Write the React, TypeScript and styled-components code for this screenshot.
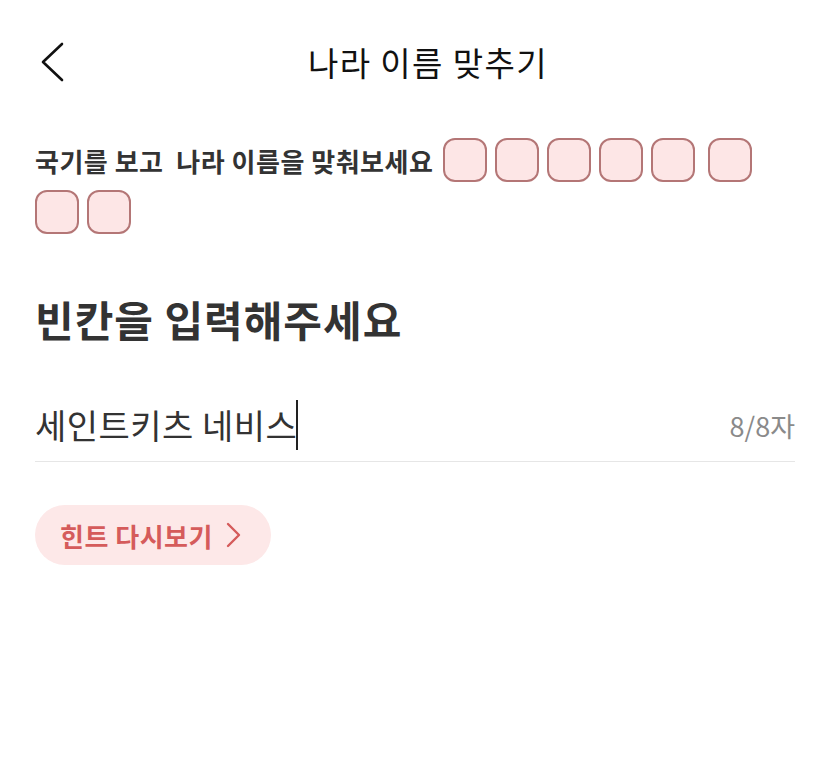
import React from "react";
import styled, { createGlobalStyle } from "styled-components";

const Global = createGlobalStyle`
  html, body { margin: 0; padding: 0; background: #ffffff; }
  body { font-family: "Noto Sans CJK KR", "Noto Sans", sans-serif; }
  * { box-sizing: border-box; }
`;

const Page = styled.div`
  width: 830px;
  min-height: 782px;
  background: #fff;
`;

const Header = styled.header`
  position: relative;
  height: 124px;
  display: flex;
  align-items: center;
  justify-content: center;
  padding-left: 26px;
`;

const BackButton = styled.button`
  position: absolute;
  left: 34px;
  top: 40px;
  width: 36px;
  height: 44px;
  padding: 0;
  border: none;
  background: transparent;
  display: flex;
  align-items: center;
  justify-content: center;
`;

const Title = styled.h1`
  margin: 0;
  font-size: 33px;
  font-weight: 400;
  color: #111;
  letter-spacing: 1.4px;
`;

const Content = styled.main`
  padding: 14px 35px 0;
`;

const Quiz = styled.div`
  display: flex;
  flex-wrap: wrap;
  align-items: center;
  row-gap: 8px;
`;

const Prompt = styled.span`
  font-size: 26px;
  font-weight: 700;
  color: #333;
  white-space: pre;
  letter-spacing: 0.5px;
  margin-right: 10px;
`;

const Box = styled.span<{ $wordStart?: boolean }>`
  width: 44px;
  height: 44px;
  border-radius: 12px;
  border: 2px solid #b47676;
  background: #fde6e6;
  margin-right: 8px;
  margin-left: ${(p) => (p.$wordStart ? "5px" : "0")};
`;

const Heading = styled.h2`
  margin: 61px 0 0;
  font-size: 42px;
  line-height: 48px;
  font-weight: 700;
  color: #333;
  letter-spacing: 1px;
`;

const InputRow = styled.div`
  margin-top: 57px;
  display: flex;
  align-items: center;
  justify-content: space-between;
  padding-bottom: 11px;
  border-bottom: 1px solid #e6e6e6;
`;

const InputText = styled.div`
  display: flex;
  align-items: center;
  font-size: 34px;
  line-height: 48px;
  color: #333;
  letter-spacing: 0.5px;
`;

const Caret = styled.span`
  display: inline-block;
  width: 2px;
  height: 50px;
  background: #222;
  margin-left: -1px;
`;

const Counter = styled.span`
  font-size: 27px;
  color: #8a8a8a;
  letter-spacing: 0;
`;

const HintButton = styled.button`
  margin-top: 43px;
  height: 60px;
  padding: 0 30px 0 25px;
  border: none;
  border-radius: 30px;
  background: #fde8e8;
  display: inline-flex;
  align-items: center;
  gap: 12px;
  font-family: inherit;
  font-size: 26px;
  font-weight: 700;
  color: #d55b5b;
  letter-spacing: 0.5px;
`;

const words = [5, 3];

export default function App() {
  return (
    <Page>
      <Global />
      <Header>
        <BackButton aria-label="뒤로">
          <svg width="26" height="40" viewBox="0 0 26 40" fill="none">
            <path d="M23 2 L4 20 L23 38" stroke="#111" strokeWidth="2.6" strokeLinecap="round" strokeLinejoin="round" />
          </svg>
        </BackButton>
        <Title>나라 이름 맞추기</Title>
      </Header>
      <Content>
        <Quiz>
          <Prompt>{"국기를 보고  나라 이름을 맞춰보세요"}</Prompt>
          {words.map((n, wi) =>
            Array.from({ length: n }).map((_, i) => (
              <Box key={`${wi}-${i}`} $wordStart={wi > 0 && i === 0} />
            ))
          )}
        </Quiz>
        <Heading>빈칸을 입력해주세요</Heading>
        <InputRow>
          <InputText>
            세인트키츠 네비스
            <Caret />
          </InputText>
          <Counter>8/8자</Counter>
        </InputRow>
        <HintButton>
          힌트 다시보기
          <svg width="16" height="26" viewBox="0 0 16 26" fill="none">
            <path d="M3 2 L14 13 L3 24" stroke="#d55b5b" strokeWidth="2.4" strokeLinecap="round" strokeLinejoin="round" />
          </svg>
        </HintButton>
      </Content>
    </Page>
  );
}
